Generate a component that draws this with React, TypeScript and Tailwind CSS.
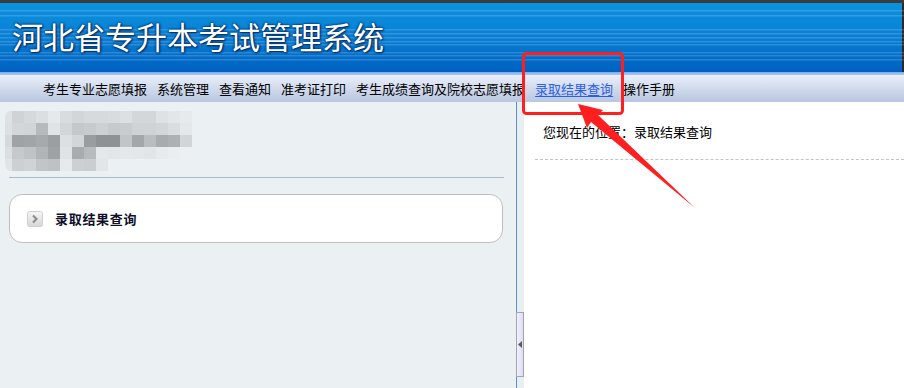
const mosaic: string[][] = [
  ["#dfe2e5", "#cfd3d6", "#d5d9dc", "#dcdfe2", "#e6e9ec", "#d8dcdf", "#d2d6d9", "#d6dadd", "#d6dadd", "#d8dcdf", "#dde0e3", "#d3d7da", "#d3d7da", "#dfe2e5", "#e3e6e9", "#e7eaed"],
  ["#dde0e3", "#d3d7da", "#d1d5d8", "#b7babd", "#e1e4e7", "#d2d6d9", "#c4c8cb", "#c7cbce", "#cdd1d4", "#c6cacd", "#c8ccce", "#cfd3d6", "#cfd3d6", "#d2d6d9", "#d9dde0", "#e5e8eb"],
  ["#d6d9dc", "#9fa3a6", "#a2a5a8", "#a7aaad", "#9c9fa2", "#dde0e3", "#d3d6d9", "#9a9da0", "#8f9295", "#8f9295", "#c2c5c8", "#a4a7aa", "#babdc0", "#a9acaf", "#aeb1b4", "#d2d5d8"],
  ["#dcdfe2", "#c6c9cc", "#c0c3c6", "#b2b5b8", "#9fa2a5", "#e0e3e6", "#a9acaf", "#b8bbbe", "#e5e8eb", "#e3e6e9", "#e5e8eb", "#e4e7ea", "#e2e5e8", "#e8ebee", "#ebeef1", "#ebf0f3"],
  ["#e1e4e7", "#cdd0d3", "#d0d3d6", "#c2c5c8", "#bfc2c5", "#e7eaed", "#ccd0d3", "#cbced1", "#e3e6e9", "#ebf0f3", "#ebf0f3", "#ebf0f3", "#ebf0f3", "#ebf0f3", "#ebf0f3", "#ebf0f3"],
];

const navItems = [
  "考生专业志愿填报",
  "系统管理",
  "查看通知",
  "准考证打印",
  "考生成绩查询及院校志愿填报",
  "录取结果查询",
  "操作手册",
];

const headerLines = [7, 12, 26, 30, 34, 38, 41, 49, 52, 56];

function Mosaic() {
  return (
    <svg width="192" height="62" viewBox="0 0 192 62">
      <defs>
        <clipPath id="mosaic-clip">
          <rect x="0" y="0" width="192" height="62" rx="8" />
        </clipPath>
      </defs>
      <g clipPath="url(#mosaic-clip)">
        {mosaic.map((row, r) =>
          row.map((c, i) => (
            <rect
              key={`${r}-${i}`}
              x={i === 0 ? 0 : 7 + (i - 1) * 12}
              y={r * 12 + 1}
              width={i === 0 ? 7 : 12}
              height={12}
              fill={c}
            />
          ))
        )}
      </g>
    </svg>
  );
}

function ChevronIcon() {
  return (
    <svg width="16" height="16" viewBox="0 0 16 16">
      <defs>
        <linearGradient id="chev-bg" x1="0" y1="0" x2="0" y2="1">
          <stop offset="0" stopColor="#f6f6f6" />
          <stop offset="1" stopColor="#d6d6d6" />
        </linearGradient>
      </defs>
      <rect x="0.5" y="0.5" width="15" height="15" rx="2" fill="url(#chev-bg)" stroke="#d0d0d0" />
      <path d="M6 4.5 L9.5 8 L6 11.5" fill="none" stroke="#8a8a8a" strokeWidth="2" />
    </svg>
  );
}

export default function App() {
  return (
    <div
      className="relative w-[904px] h-[388px] overflow-hidden flex flex-col bg-white text-black"
      style={{ fontFamily: '"Noto Sans CJK SC", "Noto Sans", sans-serif' }}
    >
      {/* top dark strip */}
      <div className="h-[3px] bg-[#3b3b3b]" />

      {/* blue banner */}
      <header className="relative h-[69px] bg-gradient-to-b from-[#0b92de] via-[#0a7fd4] to-[#0060c0] border-r-2 border-[#2a2a2a]">
        <svg className="absolute inset-0" width="904" height="69">
          {headerLines.map(y => (
            <rect key={y} x="0" y={y} width="904" height="1.5" fill="#ffffff" opacity="0.16" />
          ))}
        </svg>
        <h1 className="relative pl-[12px] pt-[13px] text-[31px] leading-[40px] font-normal text-white [text-shadow:0_0_2px_#00306e,0_0_3px_#00306e,1px_1px_2px_#002a60]">
          河北省专升本考试管理系统
        </h1>
      </header>

      <div className="h-[3px] bg-gradient-to-b from-[#79aee9] to-[#a9c9f1]" />

      {/* nav */}
      <nav className="h-[27px] bg-gradient-to-b from-[#eaeff9] to-[#b9c6e0] flex items-center pl-[43px] gap-[10px] text-[13px] leading-none">
        {navItems.map(item => (
          <span
            key={item}
            className={
              item === "录取结果查询"
                ? "text-[#2c5fe8] underline underline-offset-2"
                : "text-black"
            }
          >
            {item}
          </span>
        ))}
      </nav>

      {/* body */}
      <div className="flex flex-1 min-h-0">
        <aside className="w-[516px] bg-[#ebf0f3] pt-[8px]">
          <div className="pl-[5px] h-[62px]">
            <Mosaic />
          </div>
          <div className="mt-[5px] ml-[9px] mr-[12px] h-px bg-[#a9bbcb]" />
          <div className="mt-[16px] ml-[9px] w-[494px] h-[49px] rounded-[13px] border border-[#bfbfbf] bg-white flex items-center pl-[17px] gap-[12px]">
            <ChevronIcon />
            <span className="text-[13px] font-bold leading-none tracking-[0.7px] text-[#10102a]">
              录取结果查询
            </span>
          </div>
        </aside>

        <div className="relative w-[8px] border-l border-[#5b8ed2] bg-[#e9eef2]">
          <div className="absolute left-[-1px] top-[210px] w-[8px] h-[65px] border border-[#a6a6a6] bg-gradient-to-r from-[#f0f0ff] to-[#dcdcfa] flex items-center justify-center">
            <svg width="4" height="7" viewBox="0 0 4 7">
              <path d="M4 0 L0 3.5 L4 7 Z" fill="#5a5a5a" />
            </svg>
          </div>
        </div>

        <main className="flex-1 bg-white pl-[11px]">
          <div className="pl-[8px] pt-[22px] h-[38px] text-[13px] leading-[16px]">
            您现在的位置：录取结果查询
          </div>
          <div className="mt-[19px] border-t border-dashed border-[#c4c4c4]" />
        </main>
      </div>

      {/* annotation overlay */}
      <svg className="absolute inset-0 pointer-events-none" width="904" height="388">
        <rect x="523.5" y="53.5" width="99" height="60" rx="3" fill="none" stroke="#ff1f1f" strokeWidth="3" />
        <polygon
          points="578,104 603,110 598,115 695,208 591,122 587,128"
          fill="#ff1f1f"
        />
      </svg>
    </div>
  );
}
